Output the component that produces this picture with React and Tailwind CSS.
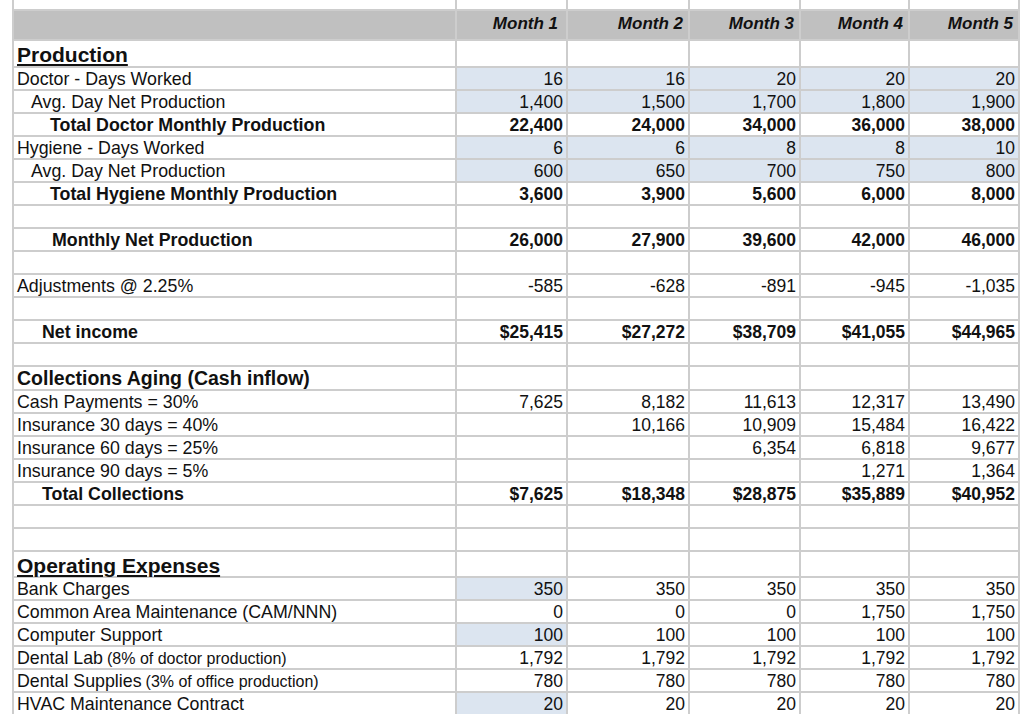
import React from 'react';

const months = ['Month 1', 'Month 2', 'Month 3', 'Month 4', 'Month 5'];

// kind: 'head' = section title, 'text' = plain row, 'bold' = total row
const rows = [
  { label: 'Production', kind: 'head', h: 'h-[25px]', size: 'text-[21px]' },
  { label: 'Doctor - Days Worked', values: ['16', '16', '20', '20', '20'], blue: [1, 1, 1, 1, 1] },
  { label: 'Avg. Day Net Production', indent: 'pl-[17px]', values: ['1,400', '1,500', '1,700', '1,800', '1,900'], blue: [1, 1, 1, 1, 1] },
  { label: 'Total Doctor Monthly Production', kind: 'bold', indent: 'pl-[36px]', values: ['22,400', '24,000', '34,000', '36,000', '38,000'] },
  { label: 'Hygiene  - Days Worked', values: ['6', '6', '8', '8', '10'], blue: [1, 1, 1, 1, 1] },
  { label: 'Avg. Day Net Production', indent: 'pl-[17px]', values: ['600', '650', '700', '750', '800'], blue: [1, 1, 1, 1, 1] },
  { label: 'Total Hygiene Monthly Production', kind: 'bold', indent: 'pl-[36px]', values: ['3,600', '3,900', '5,600', '6,000', '8,000'] },
  {},
  { label: 'Monthly Net Production', kind: 'bold', indent: 'pl-[38px]', values: ['26,000', '27,900', '39,600', '42,000', '46,000'] },
  {},
  { label: 'Adjustments @ 2.25%', values: ['-585', '-628', '-891', '-945', '-1,035'] },
  {},
  { label: 'Net income', kind: 'bold', indent: 'pl-[28px]', values: ['$25,415', '$27,272', '$38,709', '$41,055', '$44,965'] },
  {},
  { label: 'Collections Aging (Cash inflow)', kind: 'head', noUnderline: true, h: 'h-[22px]', size: 'text-[19.5px]' },
  { label: 'Cash Payments = 30%', values: ['7,625', '8,182', '11,613', '12,317', '13,490'] },
  { label: 'Insurance 30 days = 40%', values: ['', '10,166', '10,909', '15,484', '16,422'] },
  { label: 'Insurance 60 days = 25%', values: ['', '', '6,354', '6,818', '9,677'] },
  { label: 'Insurance 90 days = 5%', values: ['', '', '', '1,271', '1,364'] },
  { label: 'Total Collections', kind: 'bold', indent: 'pl-[28px]', values: ['$7,625', '$18,348', '$28,875', '$35,889', '$40,952'] },
  {},
  {},
  { label: 'Operating Expenses', kind: 'head', h: 'h-[24px]', size: 'text-[21px]' },
  { label: 'Bank Charges', values: ['350', '350', '350', '350', '350'], blue: [1] },
  { label: 'Common Area Maintenance (CAM/NNN)', values: ['0', '0', '0', '1,750', '1,750'] },
  { label: 'Computer Support', values: ['100', '100', '100', '100', '100'], blue: [1] },
  { label: 'Dental Lab', note: '(8% of doctor production)', values: ['1,792', '1,792', '1,792', '1,792', '1,792'] },
  { label: 'Dental Supplies', note: '(3% of office production)', values: ['780', '780', '780', '780', '780'] },
  { label: 'HVAC Maintenance Contract', values: ['20', '20', '20', '20', '20'], blue: [1] },
];

const Row = ({ row }) => {
  const h = row.h || 'h-[21px]';
  const bold = row.kind === 'bold';
  let labelText = 'text-[17.8px]';
  if (row.kind === 'head') labelText = `${row.size} font-bold` + (row.noUnderline ? '' : ' underline decoration-2 underline-offset-[2px]');
  if (bold) labelText = 'text-[17.8px] font-bold';

  return (
    <>
      <div className={`${h} bg-white flex items-center whitespace-nowrap leading-none pt-[2px] ${row.indent || 'pl-[3px]'} ${labelText}`}>
        {row.label}
        {row.note && <span className="text-[16px] ml-[4px]">{row.note}</span>}
      </div>
      {months.map((m, i) => (
        <div
          key={m}
          className={`${h} flex items-center justify-end pr-[3px] pt-[2px] leading-none text-[17.5px] ${bold ? 'font-bold' : ''} ${row.blue && row.blue[i] ? 'bg-[#dce5f0]' : 'bg-white'}`}
        >
          {row.values ? row.values[i] : ''}
        </div>
      ))}
    </>
  );
};

export default function App() {
  return (
    <div className="w-[1024px] h-[714px] overflow-hidden bg-white text-[#111]" style={{ fontFamily: '"Liberation Sans", Arial, sans-serif' }}>
      <div className="ml-[12px] w-fit bg-[#cdcdcd] px-[2px] grid grid-cols-[441px_109px_120px_109px_107px_108px] gap-[2px]">
        {/* top strip of the row above the header */}
        {[0, 1, 2, 3, 4, 5].map((i) => (
          <div key={i} className="h-[9px] bg-white" />
        ))}
        <div className="h-[28px] bg-[#c0c0c0]" />
        {months.map((m, i) => (
          <div
            key={m}
            className={`h-[28px] bg-[#c0c0c0] flex items-center justify-end pb-[2px] text-[17px] font-bold italic ${i === 0 ? 'pr-[8px]' : 'pr-[5px]'}`}
          >
            {m}
          </div>
        ))}
        {rows.map((row, i) => (
          <Row key={i} row={row} />
        ))}
      </div>
    </div>
  );
}
